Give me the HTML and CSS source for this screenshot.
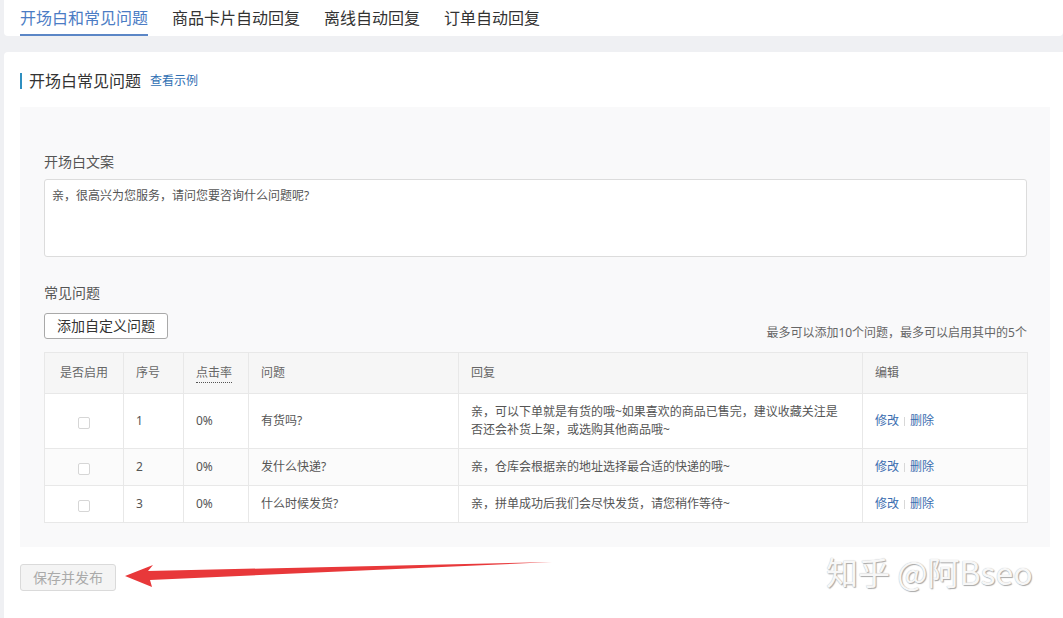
FILE: index.html
```html
<!DOCTYPE html>
<html lang="zh-CN">
<head>
<meta charset="utf-8">
<title>开场白和常见问题</title>
<link rel="stylesheet" href="styles.css">
</head>
<body>
<div class="page">
  <div class="tabs-card">
    <nav class="tabs">
      <a class="tab tab-active">开场白和常见问题</a>
      <a class="tab">商品卡片自动回复</a>
      <a class="tab">离线自动回复</a>
      <a class="tab">订单自动回复</a>
    </nav>
  </div>

  <div class="main-card">
    <div class="section-title">
      <span class="section-bar"></span>
      <h2 class="section-name">开场白常见问题</h2>
      <a class="section-link">查看示例</a>
    </div>

    <div class="panel">
      <div class="field-label">开场白文案</div>
      <textarea class="intro-text">亲，很高兴为您服务，请问您要咨询什么问题呢?</textarea>

      <div class="field-label faq-label">常见问题</div>
      <div class="toolbar">
        <button class="btn">添加自定义问题</button>
        <span class="hint">最多可以添加10个问题，最多可以启用其中的5个</span>
      </div>

      <table class="faq-table">
        <colgroup>
          <col class="c-enable"><col class="c-no"><col class="c-rate"><col class="c-q"><col class="c-a"><col class="c-edit">
        </colgroup>
        <thead>
          <tr>
            <th class="center">是否启用</th>
            <th>序号</th>
            <th><span class="dotted">点击率</span></th>
            <th>问题</th>
            <th>回复</th>
            <th>编辑</th>
          </tr>
        </thead>
        <tbody>
          <tr>
            <td class="center"><span class="checkbox"></span></td>
            <td>1</td>
            <td>0%</td>
            <td>有货吗?</td>
            <td class="answer">亲，可以下单就是有货的哦~如果喜欢的商品已售完，建议收藏关注是否还会补货上架，或选购其他商品哦~</td>
            <td><a class="link">修改</a><span class="sep"></span><a class="link">删除</a></td>
          </tr>
          <tr class="striped">
            <td class="center"><span class="checkbox"></span></td>
            <td>2</td>
            <td>0%</td>
            <td>发什么快递?</td>
            <td class="answer">亲，仓库会根据亲的地址选择最合适的快递的哦~</td>
            <td><a class="link">修改</a><span class="sep"></span><a class="link">删除</a></td>
          </tr>
          <tr>
            <td class="center"><span class="checkbox"></span></td>
            <td>3</td>
            <td>0%</td>
            <td>什么时候发货?</td>
            <td class="answer">亲，拼单成功后我们会尽快发货，请您稍作等待~</td>
            <td><a class="link">修改</a><span class="sep"></span><a class="link">删除</a></td>
          </tr>
        </tbody>
      </table>
    </div>

    <div class="actions">
      <button class="btn btn-disabled">保存并发布</button>
    </div>
  </div>
</div>

<svg class="annot-arrow" width="1063" height="618" viewBox="0 0 1063 618">
  <polygon points="125,576 153,565 148,571 552,562 150,580 152,587" fill="#e8383a"/>
</svg>

<div class="watermark">知乎 @阿Bseo</div>
</body>
</html>
```

FILE: styles.css
```css
* { box-sizing: border-box; }

html, body {
  margin: 0;
  padding: 0;
  height: 100%;
}

body {
  background: #eff0f3;
  font-family: "Noto Sans", "Noto Sans CJK SC", sans-serif;
  color: #555;
  overflow: hidden;
  position: relative;
}

.page {
  padding-left: 4px;
  height: 100%;
  display: flex;
  flex-direction: column;
}

/* ---------- tabs ---------- */
.tabs-card {
  background: #fff;
  border-radius: 0 0 4px 4px;
  height: 36px;
  padding-left: 16px;
}

.tabs {
  display: flex;
  gap: 24px;
}

.tab {
  font-size: 16px;
  line-height: 22px;
  padding-top: 7px;
  padding-bottom: 5px;
  border-bottom: 2px solid transparent;
  color: #333;
  cursor: pointer;
}

.tab-active {
  color: #4b7cc4;
  border-bottom-color: #5b86c6;
}

/* ---------- main card ---------- */
.main-card {
  margin-top: 16px;
  flex: 1;
  background: #fff;
  border-radius: 4px 0 0 0;
  padding: 21px 13px 0 16px;
}

.section-title {
  display: flex;
  align-items: center;
  height: 16px;
}

.section-bar {
  width: 2px;
  height: 16px;
  background: #2f8fc0;
}

.section-name {
  margin: 0 0 0 7px;
  font-size: 16px;
  line-height: 16px;
  font-weight: normal;
  color: #333;
}

.section-link {
  margin-left: 9px;
  font-size: 12px;
  line-height: 16px;
  color: #2f6fb3;
  cursor: pointer;
}

/* ---------- grey panel ---------- */
.panel {
  margin-top: 18px;
  background: #f9f9fa;
  padding: 45px 23px 24px 24px;
}

.field-label {
  font-size: 14px;
  line-height: 20px;
  color: #555;
}

.intro-text {
  display: block;
  margin-top: 7px;
  width: 100%;
  height: 78px;
  resize: none;
  border: 1px solid #dcdcdc;
  border-radius: 3px;
  background: #fff;
  padding: 7px 7px;
  font-family: inherit;
  font-size: 12px;
  line-height: 18px;
  color: #555;
  outline: none;
}

.faq-label {
  margin-top: 26px;
}

.toolbar {
  margin-top: 10px;
  display: flex;
  justify-content: space-between;
  align-items: flex-end;
}

.btn {
  height: 26px;
  padding: 0 12px;
  border: 1px solid #a9a9a9;
  border-radius: 3px;
  background: #fff;
  font-family: inherit;
  font-size: 14px;
  line-height: 24px;
  color: #333;
}

.hint {
  font-size: 12px;
  line-height: 16px;
  margin-bottom: -2px;
  color: #666;
}

/* ---------- table ---------- */
.faq-table {
  margin-top: 13px;
  width: 100%;
  table-layout: fixed;
  border-collapse: collapse;
  background: #fff;
  border: 1px solid #e8e8e8;
  font-size: 12px;
  line-height: 18px;
  color: #555;
}

.c-enable { width: 79px; }
.c-no { width: 60px; }
.c-rate { width: 65px; }
.c-q { width: 210px; }
.c-a { width: 404px; }
.c-edit { width: 165px; }

.faq-table th,
.faq-table td {
  border: 1px solid #e8e8e8;
  text-align: left;
  padding: 9px 12px 9px 12px;
  vertical-align: middle;
}

.faq-table th {
  background: #f6f6f6;
  font-weight: normal;
  color: #666;
  padding-top: 11px;
  padding-bottom: 11px;
}

.faq-table .center { text-align: center; }

.faq-table td.answer { padding-right: 22px; }

.striped td { background: #fbfbfb; }

.dotted {
  border-bottom: 1px dotted #555;
  padding-bottom: 1px;
}

.checkbox {
  display: inline-block;
  width: 12px;
  height: 12px;
  border: 1px solid #d6d6d6;
  border-radius: 2px;
  background: #fff;
  vertical-align: middle;
  margin-top: 3px;
}

.link {
  color: #3a6db0;
  cursor: pointer;
}

.sep {
  display: inline-block;
  width: 1px;
  height: 9px;
  background: #d8d8d8;
  margin: 0 5px;
  vertical-align: -1px;
}

/* ---------- actions ---------- */
.actions {
  margin-top: 17px;
}

.btn-disabled {
  height: 27px;
  margin-left: 0;
  padding: 0 12px;
  background: #f4f4f4;
  border-color: #dadada;
  color: #aaa;
}

/* ---------- overlays ---------- */
.annot-arrow {
  position: absolute;
  left: 0;
  top: 0;
  pointer-events: none;
}

.watermark {
  position: absolute;
  left: 826px;
  top: 551px;
  font-family: "Noto Sans CJK SC", sans-serif;
  font-size: 32px;
  line-height: 40px;
  color: #f7f7f7;
  text-shadow: 1px 1px 1px #a8a8a8, 0 0 1px #b8b8b8;
  white-space: nowrap;
}
```
